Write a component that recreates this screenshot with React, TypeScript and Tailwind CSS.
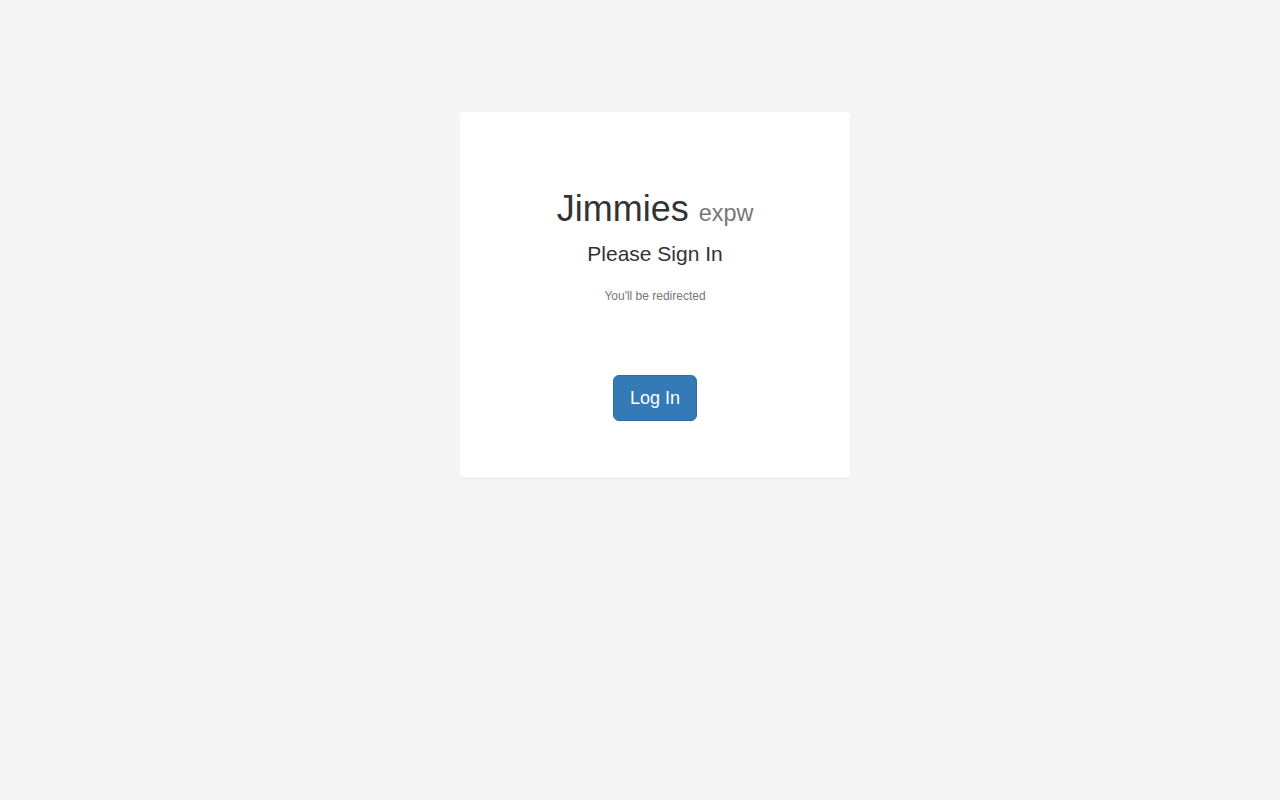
export default function App() {
  return (
    <div
      className="min-h-screen w-full bg-[#f5f5f5] text-[#333]"
      style={{ fontFamily: '"Liberation Sans", Arial, Helvetica, sans-serif' }}
    >
      <div className="flex justify-center pt-[112px]">
        <div className="ml-[30px] w-[390px] rounded-[4px] bg-white shadow-[0_1px_1px_rgba(0,0,0,0.06)] pt-[77px] pb-[57px] text-center">
          <h1 className="m-0 text-[36px] leading-[40px] font-normal">
            Jimmies <small className="text-[23.4px] text-[#777]">expw</small>
          </h1>
          <h3 className="mt-[9px] text-[21px] leading-[23px] font-normal">Please Sign In</h3>
          <p className="mt-[23px] text-[12px] leading-[17px] text-[#777]">You'll be redirected</p>
          <div className="mt-[70px]">
            <button className="rounded-[6px] border border-[#2e6da4] bg-[#337ab7] px-[16px] py-[10px] text-[18px] leading-[24px] text-white">
              Log In
            </button>
          </div>
        </div>
      </div>
    </div>
  );
}
